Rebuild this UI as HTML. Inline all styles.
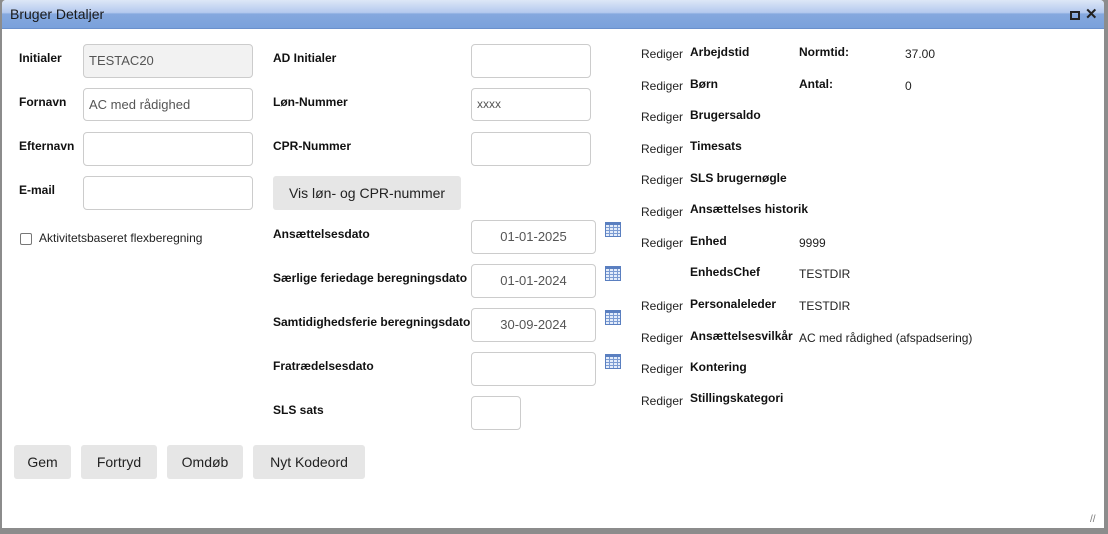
<!DOCTYPE html>
<html><head><meta charset="utf-8"><style>
*{box-sizing:border-box}
body{margin:0;width:1108px;height:534px;background:#8c8c8c;font-family:"Liberation Sans",sans-serif;position:relative;overflow:hidden;color:#222}
.dlg{position:absolute;left:2px;top:0;width:1102px;height:528px;background:#fff;border-radius:4px 4px 0 0;overflow:hidden}
.tb{position:absolute;left:0;top:0;width:100%;height:29px;background:linear-gradient(#dde7f7 0,#b4c9ee 45%,#85a8de 50%,#7aa1db 100%);border-bottom:1px solid #6a90cc}
.tb span{position:absolute;left:8px;top:6px;font-size:14px;color:#1a1a1a}
.a{position:absolute;white-space:nowrap}
.l{font-size:12px;font-weight:bold;color:#111}
.i{position:absolute;border:1px solid #ccc;border-radius:4px;background:#fff;font-size:13px;color:#555;padding-left:5px;line-height:31px}
.d{text-align:center;padding:0}
.btn{position:absolute;background:#e6e6e6;border-radius:3px;font-size:14px;color:#222;text-align:center;line-height:34px}
.r{font-size:12px;color:#222}
.v{font-size:12px;color:#222}
.cal{position:absolute;width:16px;height:15px;border:1px solid #5a7fc0;background:
repeating-linear-gradient(90deg,transparent 0 3px,#7b9bd2 3px 4px),#e3ecfa}
.cal:before{content:"";position:absolute;left:0;top:0;right:0;height:2px;background:#5a7fc0}
.cal:after{content:"";position:absolute;left:0;right:0;top:2px;bottom:0;background:repeating-linear-gradient(0deg,transparent 0 2px,#7b9bd2 2px 3px)}
</style></head><body>
<div class="dlg">
<div class="tb"><span>Bruger Detaljer</span>
<div class="a" style="left:1068px;top:11px;width:10px;height:9px;border:2px solid #222"></div>
<div class="a" style="left:1083px;top:5px;font-size:15px;font-weight:bold;color:#222">✕</div>
</div>

<div class="a l" style="left:17px;top:51px">Initialer</div>
<div class="i" style="left:81px;top:44px;width:170px;height:34px;background:#f2f2f2">TESTAC20</div>
<div class="a l" style="left:17px;top:95px">Fornavn</div>
<div class="i" style="left:81px;top:88px;width:170px;height:33px">AC med rådighed</div>
<div class="a l" style="left:17px;top:139px">Efternavn</div>
<div class="i" style="left:81px;top:132px;width:170px;height:34px"></div>
<div class="a l" style="left:17px;top:183px">E-mail</div>
<div class="i" style="left:81px;top:176px;width:170px;height:34px"></div>
<div class="a" style="left:18px;top:233px;width:12px;height:12px;border:1px solid #777;border-radius:2px"></div>
<div class="a" style="left:37px;top:231px;font-size:12px">Aktivitetsbaseret flexberegning</div>

<div class="a l" style="left:271px;top:51px">AD Initialer</div>
<div class="i" style="left:469px;top:44px;width:120px;height:34px"></div>
<div class="a l" style="left:271px;top:95px">Løn-Nummer</div>
<div class="i" style="left:469px;top:88px;width:120px;height:33px;font-size:12px">xxxx</div>
<div class="a l" style="left:271px;top:139px">CPR-Nummer</div>
<div class="i" style="left:469px;top:132px;width:120px;height:34px"></div>
<div class="btn" style="left:271px;top:176px;width:188px;height:34px">Vis løn- og CPR-nummer</div>
<div class="a l" style="left:271px;top:227px">Ansættelsesdato</div>
<div class="i d" style="left:469px;top:220px;width:125px;height:34px">01-01-2025</div>
<div class="cal" style="left:603px;top:222px"></div>
<div class="a l" style="left:271px;top:271px">Særlige feriedage beregningsdato</div>
<div class="i d" style="left:469px;top:264px;width:125px;height:34px">01-01-2024</div>
<div class="cal" style="left:603px;top:266px"></div>
<div class="a l" style="left:271px;top:315px">Samtidighedsferie beregningsdato</div>
<div class="i d" style="left:469px;top:308px;width:125px;height:34px">30-09-2024</div>
<div class="cal" style="left:603px;top:310px"></div>
<div class="a l" style="left:271px;top:359px">Fratrædelsesdato</div>
<div class="i" style="left:469px;top:352px;width:125px;height:34px"></div>
<div class="cal" style="left:603px;top:354px"></div>
<div class="a l" style="left:271px;top:403px">SLS sats</div>
<div class="i" style="left:469px;top:396px;width:50px;height:34px"></div>

<div class="a r" style="left:639px;top:47px">Rediger</div><div class="a l" style="left:688px;top:45px">Arbejdstid</div><div class="a l" style="left:797px;top:45px">Normtid:</div><div class="a v" style="left:903px;top:47px">37.00</div>
<div class="a r" style="left:639px;top:79px">Rediger</div><div class="a l" style="left:688px;top:77px">Børn</div><div class="a l" style="left:797px;top:77px">Antal:</div><div class="a v" style="left:903px;top:79px">0</div>
<div class="a r" style="left:639px;top:110px">Rediger</div><div class="a l" style="left:688px;top:108px">Brugersaldo</div>
<div class="a r" style="left:639px;top:142px">Rediger</div><div class="a l" style="left:688px;top:139px">Timesats</div>
<div class="a r" style="left:639px;top:173px">Rediger</div><div class="a l" style="left:688px;top:171px">SLS brugernøgle</div>
<div class="a r" style="left:639px;top:205px">Rediger</div><div class="a l" style="left:688px;top:202px">Ansættelses historik</div>
<div class="a r" style="left:639px;top:236px">Rediger</div><div class="a l" style="left:688px;top:234px">Enhed</div><div class="a v" style="left:797px;top:236px">9999</div>
<div class="a l" style="left:688px;top:265px">EnhedsChef</div><div class="a v" style="left:797px;top:267px">TESTDIR</div>
<div class="a r" style="left:639px;top:299px">Rediger</div><div class="a l" style="left:688px;top:297px">Personaleleder</div><div class="a v" style="left:797px;top:299px">TESTDIR</div>
<div class="a r" style="left:639px;top:331px">Rediger</div><div class="a l" style="left:688px;top:329px">Ansættelsesvilkår</div><div class="a v" style="left:797px;top:331px">AC med rådighed (afspadsering)</div>
<div class="a r" style="left:639px;top:362px">Rediger</div><div class="a l" style="left:688px;top:360px">Kontering</div>
<div class="a r" style="left:639px;top:394px">Rediger</div><div class="a l" style="left:688px;top:391px">Stillingskategori</div>

<div class="btn" style="left:12px;top:445px;width:57px;height:34px">Gem</div>
<div class="btn" style="left:79px;top:445px;width:76px;height:34px">Fortryd</div>
<div class="btn" style="left:165px;top:445px;width:76px;height:34px">Omdøb</div>
<div class="btn" style="left:251px;top:445px;width:112px;height:34px">Nyt Kodeord</div>
<div class="a" style="left:1088px;top:514px;font-size:10px;color:#777">//</div>
</div>
</body></html>
